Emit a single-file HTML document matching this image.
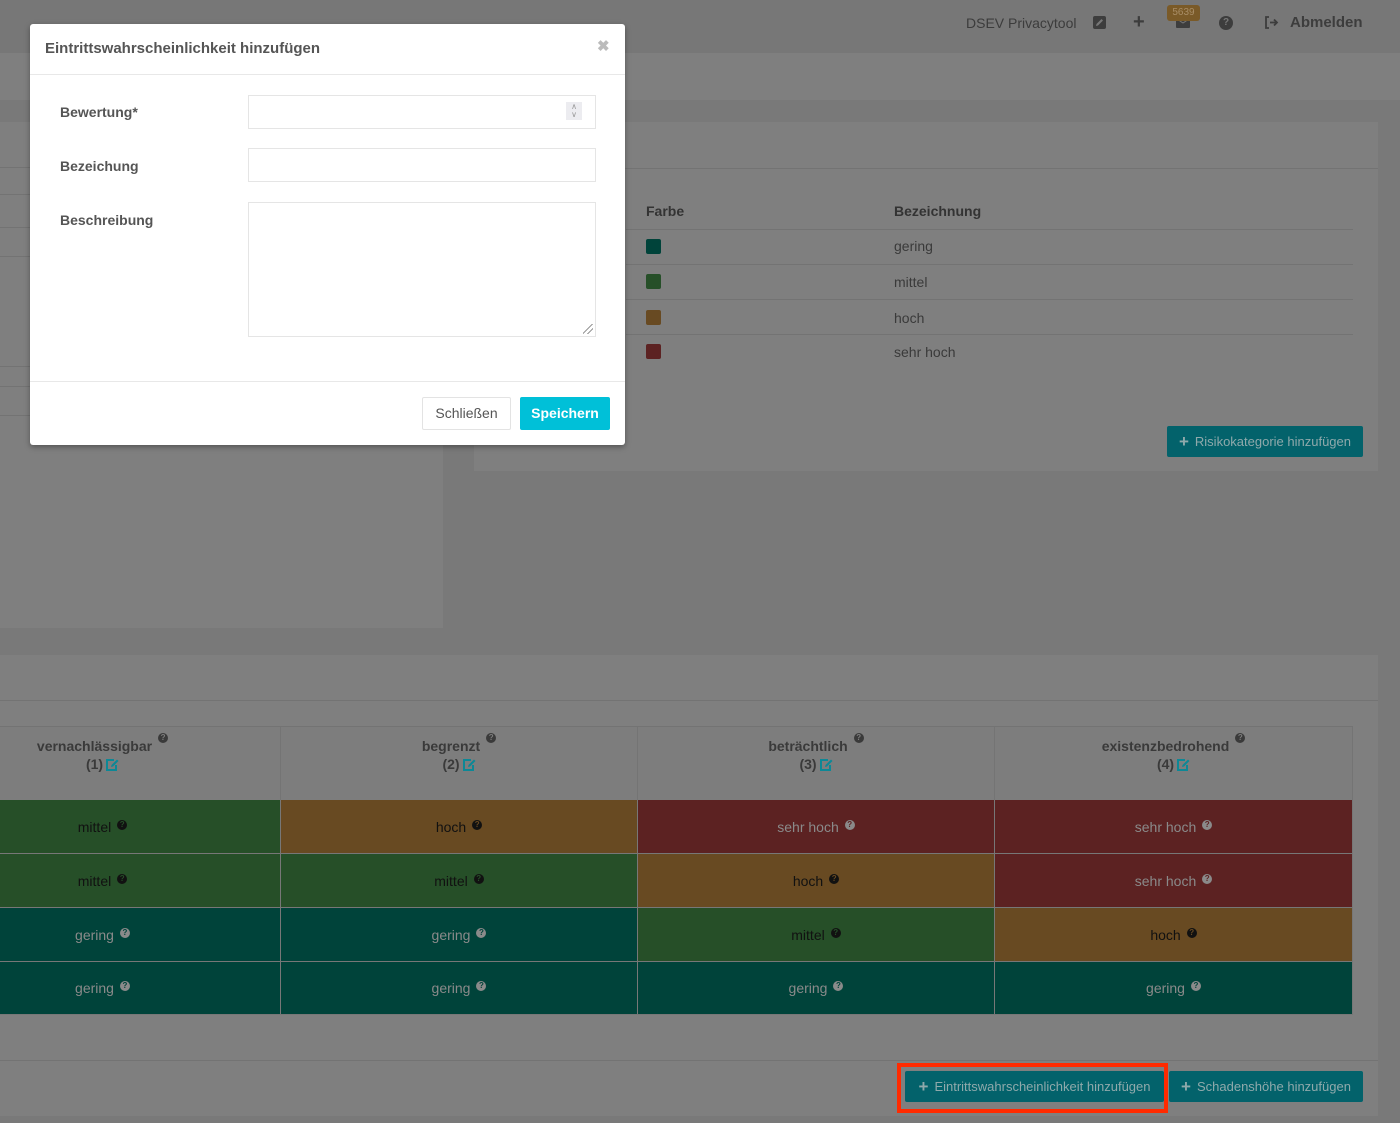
<!DOCTYPE html>
<html><head><meta charset="utf-8"><style>
*{box-sizing:border-box;margin:0;padding:0}
body{width:1400px;height:1123px;background:#797979;font-family:"Liberation Sans",sans-serif;position:relative;overflow:hidden;color:#333}
.abs{position:absolute}
.hl{position:absolute;height:1px;background:#737373}
.q{display:inline-block;width:10px;height:10px;border-radius:50%;font-size:8px;line-height:10px;text-align:center;font-weight:bold;vertical-align:top;margin-left:6px;margin-top:-4px}
.cell{position:absolute;display:flex;align-items:center;justify-content:center;font-size:14px;border-right:1px solid #777;border-bottom:1px solid #777}
.btn{position:absolute;background:#03626b;color:#8fa9ab;font-size:13px;border-radius:2px;display:flex;align-items:center;justify-content:center}
.btn b{font-size:17px;margin-right:6px;font-weight:bold}
.th{position:absolute;text-align:center;font-weight:bold;font-size:14px;color:#3a3a3a;border-right:1px solid #747474;top:727px;height:73px;padding-top:10px;line-height:18px}
.th svg{vertical-align:-2px;margin-left:2px}
.G{background:#264f28}.O{background:#684a22}.R{background:#5c2222}.T{background:#00433a}
</style></head><body>
<div class="abs" style="left:0;top:0;width:1400px;height:53px;background:#777"></div>
<div class="abs" style="left:966px;top:15px;font-size:14px;color:#3c3c3c">DSEV Privacytool</div>
<svg class="abs" style="left:1093px;top:16px" width="13" height="13" viewBox="0 0 13 13"><rect width="13" height="13" rx="2" fill="#3d3d3d"/><path d="M3 10 L3.5 8 L8.5 3 L10 4.5 L5 9.5 Z" fill="#777"/></svg>
<div class="abs" style="left:1133px;top:11px;font-size:20px;color:#3d3d3d;font-weight:bold">+</div>
<svg class="abs" style="left:1176px;top:17px" width="14" height="11" viewBox="0 0 14 11"><rect width="14" height="11" rx="1" fill="#3d3d3d"/><path d="M1 2 L7 6 L13 2" stroke="#777" stroke-width="1" fill="none"/></svg>
<div class="abs" style="left:1167px;top:5px;width:33px;height:16px;background:#7a5a28;border-radius:3px;color:#a88d66;font-size:10px;text-align:center;line-height:16px">5639</div>
<div class="abs" style="left:1219px;top:16px;width:14px;height:14px;border-radius:50%;background:#3d3d3d;color:#777;font-size:10px;text-align:center;line-height:14px;font-weight:bold">?</div>
<svg class="abs" style="left:1264px;top:16px" width="15" height="13" viewBox="0 0 15 13"><path d="M5 1 H2 V12 H5 M6 6.5 H13 M10 3.5 L13 6.5 L10 9.5" stroke="#3d3d3d" stroke-width="1.8" fill="none"/></svg>
<div class="abs" style="left:1290px;top:14px;font-size:15px;color:#3d3d3d;font-weight:bold">Abmelden</div>
<div class="abs" style="left:0;top:53px;width:1400px;height:47px;background:#7f7f7f"></div>
<div class="abs" style="left:0;top:122px;width:443px;height:506px;background:#7f7f7f"></div>
<div class="hl" style="left:0;top:167px;width:443px"></div>
<div class="hl" style="left:0;top:194px;width:443px"></div>
<div class="hl" style="left:0;top:227px;width:443px"></div>
<div class="hl" style="left:0;top:256px;width:443px"></div>
<div class="hl" style="left:0;top:366px;width:443px"></div>
<div class="hl" style="left:0;top:386px;width:443px"></div>
<div class="hl" style="left:0;top:415px;width:443px"></div>
<div class="abs" style="left:474px;top:122px;width:904px;height:349px;background:#7f7f7f"></div>
<div class="hl" style="left:474px;top:168px;width:904px"></div>
<div class="abs" style="left:646px;top:203px;font-size:14px;font-weight:bold;color:#333">Farbe</div>
<div class="abs" style="left:894px;top:203px;font-size:14px;font-weight:bold;color:#333">Bezeichnung</div>
<div class="hl" style="left:626px;top:229px;width:727px"></div>
<div class="hl" style="left:626px;top:264px;width:727px"></div>
<div class="hl" style="left:626px;top:299px;width:727px"></div>
<div class="hl" style="left:626px;top:334px;width:727px"></div>
<div class="abs T" style="left:646px;top:239px;width:15px;height:15px;border-radius:2px"></div>
<div class="abs G" style="left:646px;top:274px;width:15px;height:15px;border-radius:2px"></div>
<div class="abs O" style="left:646px;top:310px;width:15px;height:15px;border-radius:2px"></div>
<div class="abs R" style="left:646px;top:344px;width:15px;height:15px;border-radius:2px"></div>
<div class="abs" style="left:894px;top:238px;font-size:14px;color:#3a3a3a">gering</div>
<div class="abs" style="left:894px;top:274px;font-size:14px;color:#3a3a3a">mittel</div>
<div class="abs" style="left:894px;top:310px;font-size:14px;color:#3a3a3a">hoch</div>
<div class="abs" style="left:894px;top:344px;font-size:14px;color:#3a3a3a">sehr hoch</div>
<div class="btn" style="left:1167px;top:426px;width:196px;height:31px"><b>+</b>Risikokategorie hinzufügen</div>
<div class="abs" style="left:0;top:655px;width:1378px;height:461px;background:#7f7f7f"></div>
<div class="hl" style="left:0;top:700px;width:1378px"></div>
<div class="hl" style="left:0;top:726px;width:1353px"></div>
<div class="abs" style="left:0;top:727px;width:1353px;height:73px;background:#7d7d7d"></div>
<svg width="0" height="0" style="position:absolute"><defs><symbol id="ed" viewBox="0 0 14 13"><path d="M9 2 H2 V12 H11 V7" stroke="#0d8896" stroke-width="2" fill="none"/><path d="M6 9 L6.5 7 L12 1.5 L13.5 3 L8 8.5 Z" fill="#0d8896"/></symbol></defs></svg>
<div class="th" style="left:-75px;width:356px">vernachlässigbar<span class="q" style="background:#3a3a3a;color:#7d7d7d">?</span><br>(1)<svg width="14" height="13"><use href="#ed"/></svg></div>
<div class="th" style="left:281px;width:357px">begrenzt<span class="q" style="background:#3a3a3a;color:#7d7d7d">?</span><br>(2)<svg width="14" height="13"><use href="#ed"/></svg></div>
<div class="th" style="left:638px;width:357px">beträchtlich<span class="q" style="background:#3a3a3a;color:#7d7d7d">?</span><br>(3)<svg width="14" height="13"><use href="#ed"/></svg></div>
<div class="th" style="left:995px;width:358px">existenzbedrohend<span class="q" style="background:#3a3a3a;color:#7d7d7d">?</span><br>(4)<svg width="14" height="13"><use href="#ed"/></svg></div>
<div class="cell G" style="left:-75px;top:800px;width:356px;height:54px;color:#111">mittel<span class="q" style="background:#111;color:#264f28">?</span></div>
<div class="cell O" style="left:281px;top:800px;width:357px;height:54px;color:#111">hoch<span class="q" style="background:#111;color:#684a22">?</span></div>
<div class="cell R" style="left:638px;top:800px;width:357px;height:54px;color:#8a8a8a">sehr hoch<span class="q" style="background:#8a8a8a;color:#5c2222">?</span></div>
<div class="cell R" style="left:995px;top:800px;width:358px;height:54px;color:#8a8a8a">sehr hoch<span class="q" style="background:#8a8a8a;color:#5c2222">?</span></div>
<div class="cell G" style="left:-75px;top:854px;width:356px;height:54px;color:#111">mittel<span class="q" style="background:#111;color:#264f28">?</span></div>
<div class="cell G" style="left:281px;top:854px;width:357px;height:54px;color:#111">mittel<span class="q" style="background:#111;color:#264f28">?</span></div>
<div class="cell O" style="left:638px;top:854px;width:357px;height:54px;color:#111">hoch<span class="q" style="background:#111;color:#684a22">?</span></div>
<div class="cell R" style="left:995px;top:854px;width:358px;height:54px;color:#8a8a8a">sehr hoch<span class="q" style="background:#8a8a8a;color:#5c2222">?</span></div>
<div class="cell T" style="left:-75px;top:908px;width:356px;height:54px;color:#8a8a8a">gering<span class="q" style="background:#8a8a8a;color:#00433a">?</span></div>
<div class="cell T" style="left:281px;top:908px;width:357px;height:54px;color:#8a8a8a">gering<span class="q" style="background:#8a8a8a;color:#00433a">?</span></div>
<div class="cell G" style="left:638px;top:908px;width:357px;height:54px;color:#111">mittel<span class="q" style="background:#111;color:#264f28">?</span></div>
<div class="cell O" style="left:995px;top:908px;width:358px;height:54px;color:#111">hoch<span class="q" style="background:#111;color:#684a22">?</span></div>
<div class="cell T" style="left:-75px;top:962px;width:356px;height:53px;color:#8a8a8a">gering<span class="q" style="background:#8a8a8a;color:#00433a">?</span></div>
<div class="cell T" style="left:281px;top:962px;width:357px;height:53px;color:#8a8a8a">gering<span class="q" style="background:#8a8a8a;color:#00433a">?</span></div>
<div class="cell T" style="left:638px;top:962px;width:357px;height:53px;color:#8a8a8a">gering<span class="q" style="background:#8a8a8a;color:#00433a">?</span></div>
<div class="cell T" style="left:995px;top:962px;width:358px;height:53px;color:#8a8a8a">gering<span class="q" style="background:#8a8a8a;color:#00433a">?</span></div>
<div class="hl" style="left:0;top:1060px;width:1378px"></div>
<div class="btn" style="left:905px;top:1071px;width:259px;height:31px"><b>+</b>Eintrittswahrscheinlichkeit hinzufügen</div>
<div class="btn" style="left:1169px;top:1071px;width:194px;height:31px"><b>+</b>Schadenshöhe hinzufügen</div>
<div class="abs" style="left:897px;top:1063px;width:271px;height:50px;border:4px solid #ff2a00"></div>
<div class="abs" style="left:30px;top:24px;width:595px;height:421px;background:#fff;border-radius:3px;box-shadow:0 2px 6px rgba(0,0,0,.35)">
 <div class="abs" style="left:15px;top:16px;font-size:15px;font-weight:bold;color:#555">Eintrittswahrscheinlichkeit hinzufügen</div>
 <div class="abs" style="left:567px;top:13px;font-size:15px;color:#bbb;font-weight:bold">&#x2716;</div>
 <div class="abs" style="left:0;top:50px;width:595px;height:1px;background:#e8e8e8"></div>
 <div class="abs" style="left:30px;top:80px;font-size:14px;font-weight:bold;color:#555">Bewertung*</div>
 <div class="abs" style="left:218px;top:71px;width:348px;height:34px;border:1px solid #e5e5e5"></div>
 <div class="abs" style="left:536px;top:78px;width:16px;height:18px;background:#ececf0;color:#999;font-size:8px;text-align:center;line-height:8px;padding-top:1px">&#x2227;<br>&#x2228;</div>
 <div class="abs" style="left:30px;top:134px;font-size:14px;font-weight:bold;color:#555">Bezeichung</div>
 <div class="abs" style="left:218px;top:124px;width:348px;height:34px;border:1px solid #e5e5e5"></div>
 <div class="abs" style="left:30px;top:188px;font-size:14px;font-weight:bold;color:#555">Beschreibung</div>
 <div class="abs" style="left:218px;top:178px;width:348px;height:135px;border:1px solid #e5e5e5"></div>
 <div class="abs" style="left:553px;top:300px;width:10px;height:10px;background:linear-gradient(135deg,transparent 45%,#999 45%,#999 52%,transparent 52%,transparent 70%,#999 70%,#999 77%,transparent 77%)"></div>
 <div class="abs" style="left:0;top:357px;width:595px;height:1px;background:#e8e8e8"></div>
 <div class="abs" style="left:392px;top:373px;width:89px;height:33px;border:1px solid #e3e3e3;border-radius:2px;font-size:14px;color:#555;text-align:center;line-height:31px">Schließen</div>
 <div class="abs" style="left:490px;top:373px;width:90px;height:33px;background:#00c0d8;border-radius:2px;font-size:14px;color:#fff;text-align:center;line-height:33px;font-weight:bold">Speichern</div>
</div>
</body></html>
